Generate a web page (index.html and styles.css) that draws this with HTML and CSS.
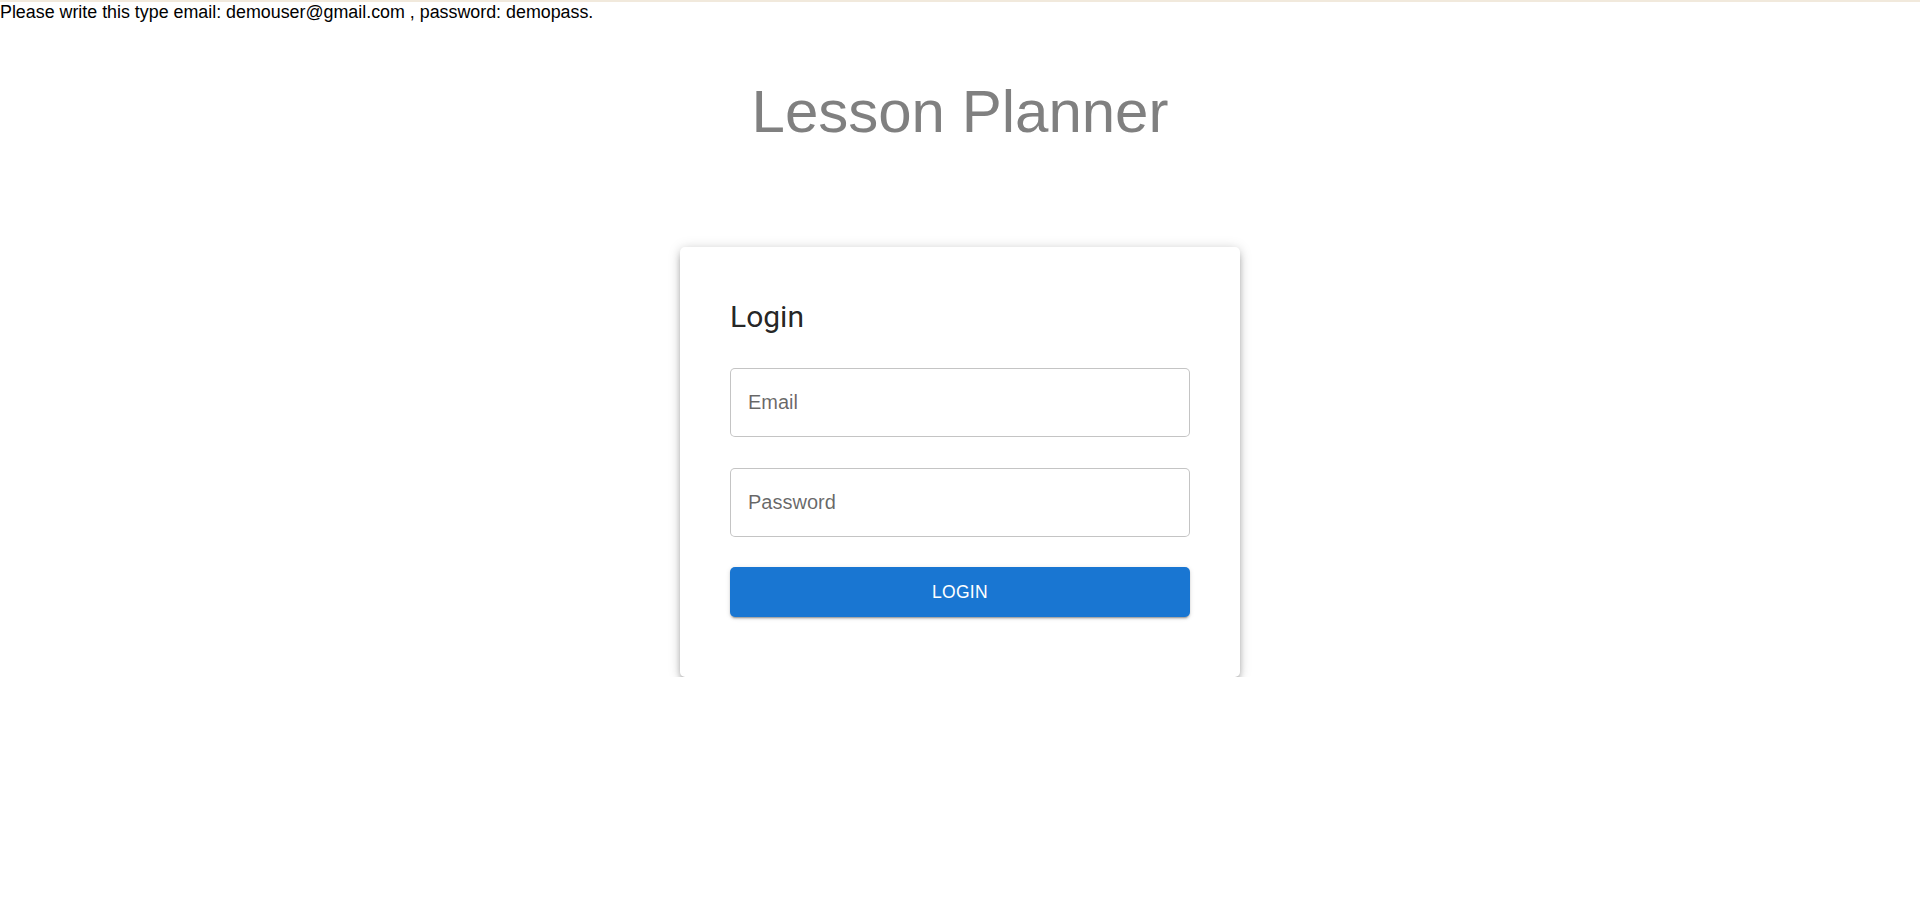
FILE: index.html
```html
<!DOCTYPE html>
<html lang="en">
<head>
<meta charset="utf-8">
<title>Lesson Planner</title>
<link rel="stylesheet" href="styles.css">
</head>
<body>
<div class="topbar"></div>
<div class="hint">Please write this type email: demouser@gmail.com , password: demopass.</div>
<h1 class="title">Lesson Planner</h1>
<main class="card">
  <h2 class="card-title">Login</h2>
  <form class="form">
    <input class="field" type="email" placeholder="Email">
    <input class="field" type="password" placeholder="Password">
    <button class="btn" type="button">Login</button>
  </form>
</main>
</body>
</html>
```
FILE: styles.css
```css
html, body {
  margin: 0;
  padding: 0;
  background: #ffffff;
}
body {
  font-family: "Liberation Sans", Arial, sans-serif;
}
.topbar {
  height: 2px;
  background: #f1e9dc;
}
.hint {
  font-size: 17.85px;
  line-height: 21px;
  color: #000;
  white-space: nowrap;
}
.title {
  margin: 54px 0 0;
  font-family: "Liberation Sans", Arial, sans-serif;
  font-weight: 400;
  font-size: 60px;
  line-height: 69px;
  color: #808080;
  text-align: center;
}
.card {
  box-sizing: border-box;
  width: 560px;
  margin: 101px auto 0;
  padding: 50px 50px 60px;
  background: #fff;
  border-radius: 5px;
  box-shadow: 0 6px 7px -3px rgba(0,0,0,0.38), 0 3px 8px 0 rgba(0,0,0,0.14), 0 1px 14px 0 rgba(0,0,0,0.12);
}
.card-title {
  margin: 0 0 31px;
  font-family: Roboto, "Liberation Sans", sans-serif;
  font-weight: 400;
  font-size: 30px;
  line-height: 40px;
  color: rgba(0,0,0,0.87);
}
.form {
  display: flex;
  flex-direction: column;
  gap: 31px;
}
.field {
  box-sizing: border-box;
  width: 100%;
  height: 69px;
  margin: 0;
  padding: 0 17px;
  border: 1px solid rgba(0,0,0,0.23);
  border-radius: 5px;
  font-family: "Liberation Sans", Arial, sans-serif;
  font-size: 20px;
  color: rgba(0,0,0,0.87);
  background: #fff;
  outline: none;
}
.field::placeholder {
  color: rgba(0,0,0,0.6);
  opacity: 1;
}
.btn {
  box-sizing: border-box;
  width: 100%;
  height: 50px;
  margin-top: -1px;
  border: 0;
  border-radius: 5px;
  background: #1976d2;
  color: #fff;
  font-family: "Liberation Sans", Arial, sans-serif;
  font-weight: 400;
  font-size: 17.5px;
  letter-spacing: 0.3px;
  text-transform: uppercase;
  box-shadow: 0 3px 1px -2px rgba(0,0,0,0.2), 0 2px 2px 0 rgba(0,0,0,0.14), 0 1px 5px 0 rgba(0,0,0,0.12);
  cursor: pointer;
}
```
